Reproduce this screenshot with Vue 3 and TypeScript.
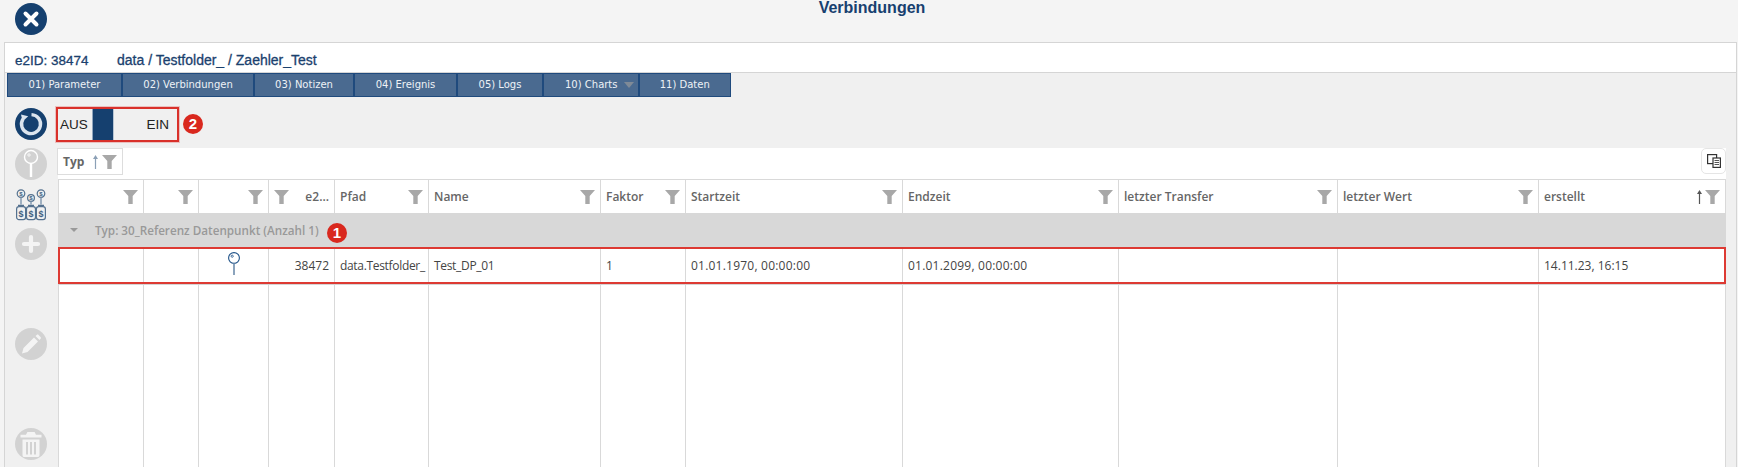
<script setup lang="ts">
interface Col { label: string; sort?: boolean; filterFirst?: boolean }
const tabs: string[] = ['01) Parameter', '02) Verbindungen', '03) Notizen', '04) Ereignis', '05) Logs', '10) Charts', '11) Daten']
const cols: Col[] = [
  { label: '' }, { label: '' }, { label: '' },
  { label: 'e2...', filterFirst: true },
  { label: 'Pfad' }, { label: 'Name' }, { label: 'Faktor' }, { label: 'Startzeit' }, { label: 'Endzeit' },
  { label: 'letzter Transfer' }, { label: 'letzter Wert' }, { label: 'erstellt', sort: true },
]
const cells: string[] = ['', '', '', '38472', 'data.Testfolder_', 'Test_DP_01', '1', '01.01.1970, 00:00:00', '01.01.2099, 00:00:00', '', '', '14.11.23, 16:15']
</script>

<template>
  <div class="page">
    <header class="titlebar">
      <svg class="close" viewBox="0 0 32 32" width="32" height="32">
        <circle cx="16" cy="16" r="16" fill="#15406f" />
        <path d="M10.5 10.5L21.5 21.5M21.5 10.5L10.5 21.5" stroke="#fff" stroke-width="4" stroke-linecap="round" />
      </svg>
      <h1 class="title">Verbindungen</h1>
    </header>

    <section class="panel">
      <div class="crumb">
        <span class="id">e2ID: 38474</span>
        <span class="path">data / Testfolder_ / Zaehler_Test</span>
      </div>
      <div class="body">
        <nav class="tabs">
          <div v-for="t in tabs" :key="t" class="tab">
            {{ t }}<span v-if="t.includes('Charts')" class="tab-caret"></span>
          </div>
        </nav>
        <div class="main">
          <aside class="side">
            <svg class="ic ic-refresh" viewBox="0 0 32 32" width="32" height="32">
              <circle cx="16" cy="16" r="16" fill="#15406f" />
              <path d="M16.5 6.6A9.5 9.5 0 1 1 8 11" fill="none" stroke="#dbe4ee" stroke-width="3.4" />
              <path d="M6 6.5L13.2 8.2L7.6 13.6Z" fill="#dbe4ee" />
            </svg>
            <svg class="ic ic-pin" viewBox="0 0 32 32" width="32" height="32">
              <circle cx="16" cy="16" r="16" fill="#d2d2d2" />
              <circle cx="16" cy="9" r="6.5" fill="none" stroke="#fff" stroke-width="1.4" />
              <circle cx="14" cy="7" r="1.2" fill="none" stroke="#fff" stroke-width=".8" />
              <path d="M16 15.5V29" stroke="#fff" stroke-width="2.4" />
            </svg>
            <svg class="ic-multi" viewBox="0 0 32 32" width="32" height="32">
              <g fill="none" stroke="#54718f" stroke-width="1.2">
                <circle cx="6" cy="4.6" r="3.8" /><circle cx="16" cy="9" r="3.4" /><circle cx="26" cy="4.6" r="3.8" />
                <path d="M6 8.5V15.5M16 12.5V15.5M26 8.5V15.5" stroke-width="1.6" stroke="#8ba0b6" />
                <rect x="1.6" y="17.6" width="9" height="13" rx="2.4" />
                <rect x="11.5" y="17.6" width="9" height="13" rx="2.4" />
                <rect x="21.4" y="17.6" width="9" height="13" rx="2.4" />
                <path d="M3 16.5H9M13 16.5H19M23 16.5H29" stroke-width="1.6" />
              </g>
              <g class="dollar" fill="#3f5f82">
                <text x="6" y="6.8">$</text><text x="16" y="11">$</text><text x="26" y="6.8">$</text>
                <text class="big" x="6" y="27.5">$</text><text class="big" x="16" y="27.5">$</text><text class="big" x="26" y="27.5">$</text>
              </g>
            </svg>
            <svg class="ic ic-plus" viewBox="0 0 32 32" width="32" height="32">
              <circle cx="16" cy="16" r="16" fill="#d2d2d2" />
              <path d="M16 9V23M9 16H23" stroke="#f4f4f4" stroke-width="4.2" stroke-linecap="round" />
            </svg>
            <svg class="ic ic-pencil" viewBox="0 0 32 32" width="32" height="32">
              <circle cx="16" cy="16" r="16" fill="#d2d2d2" />
              <path d="M7.5 24.5L9 19L19.5 8.5L23.5 12.5L13 23Z M21 7L22.2 5.9C22.8 5.4 23.5 5.4 24 5.9L26 7.9C26.6 8.5 26.6 9.2 26 9.8L25 11Z" fill="#f4f4f4" transform="translate(-.5 1)" />
            </svg>
            <svg class="ic ic-trash" viewBox="0 0 32 32" width="32" height="32">
              <circle cx="16" cy="16" r="16" fill="#d2d2d2" />
              <path d="M5.5 9.5H26.5V6.8H21L19.6 4H12.4L11 6.8H5.5Z" fill="#f4f4f4" />
              <path d="M7.5 11.5H24.5V27C24.5 28.4 23.6 29 22.6 29H9.4C8.4 29 7.5 28.4 7.5 27Z M11 14V26.5H13V14Z M15 14V26.5H17V14Z M19 14V26.5H21V14Z" fill="#f4f4f4" fill-rule="evenodd" />
            </svg>
          </aside>

          <div class="content">
            <div class="toolbar">
              <div class="switch">
                <span class="s-off">AUS</span>
                <span class="s-thumb"></span>
                <span class="s-on">EIN</span>
              </div>
              <span class="badge badge-2">2</span>
            </div>

            <div class="table">
              <div class="groupbar">
                <div class="chip">
                  <span>Typ</span>
                  <svg class="arrow" viewBox="0 0 5 14" width="5" height="14"><path d="M2.5 0L5 4H3.1V14H1.9V4H0Z" fill="#8ba0b6" /></svg>
                  <svg class="funnel" viewBox="0 0 15 14" width="15" height="14"><path d="M0 0H15L9.7 6V14H5.3V6Z" fill="#a8a8a8" /></svg>
                </div>
                <button class="copy" type="button" aria-label="Spalten">
                  <svg viewBox="0 0 14 14" width="14" height="14">
                    <rect x=".6" y=".6" width="9" height="9" fill="#fff" stroke="#333" stroke-width="1.2" />
                    <rect x="6" y="4" width="7.4" height="9.4" fill="#fff" stroke="#333" stroke-width="1.2" />
                    <path d="M7.5 6.5H12M7.5 8.5H12M7.5 10.5H12" stroke="#555" />
                  </svg>
                </button>
              </div>

              <div class="row head">
                <div v-for="(c, i) in cols" :key="i" class="th" :class="{ 'filter-first': c.filterFirst }">
                  <span class="th-label">{{ c.label }}</span>
                  <svg v-if="c.sort" class="arrow" viewBox="0 0 5 14" width="5" height="14"><path d="M2.5 0L5 4H3.1V14H1.9V4H0Z" fill="#555" /></svg>
                  <svg class="funnel" viewBox="0 0 15 14" width="15" height="14"><path d="M0 0H15L9.7 6V14H5.3V6Z" fill="#a8a8a8" /></svg>
                </div>
              </div>

              <div class="group">
                <span class="g-caret"></span>
                <span class="g-text">Typ: 30_Referenz Datenpunkt (Anzahl 1)</span>
                <span class="badge badge-1">1</span>
              </div>

              <div class="row data">
                <div v-for="(c, i) in cells" :key="i" class="td" :class="{ num: i === 3, tight: i === 4 || i === 5, wide: i === 7 || i === 8 }">
                  <svg v-if="i === 2" class="row-pin" viewBox="0 0 14 24" width="14" height="24">
                    <circle cx="7" cy="7" r="5.4" fill="#fff" stroke="#1f5288" stroke-width="1.1" />
                    <circle cx="5.2" cy="5.2" r="1.1" fill="none" stroke="#1f5288" stroke-width=".8" />
                    <path d="M7 12.5V24" stroke="#8ba3bc" stroke-width="2" />
                  </svg>
                  {{ c }}
                </div>
              </div>

              <div class="row filler">
                <div v-for="(c, i) in cols" :key="i" class="td"></div>
              </div>
            </div>
          </div>
        </div>
      </div>
    </section>
  </div>
</template>

<style>
html, body { margin: 0; background: #f4f4f4; }
</style>

<style scoped>
.page {
  width: 1738px;
  height: 467px;
  overflow: hidden;
  background: #f4f4f4;
  display: flex;
  flex-direction: column;
  font-family: "Liberation Sans", Arial, sans-serif;
}
.titlebar {
  height: 42px;
  flex: none;
  display: grid;
  grid-template-columns: 47px 1fr 41px;
  box-sizing: border-box;
}
.close { margin: 3px 0 0 15px; }
.title {
  margin: 0;
  text-align: center;
  font-size: 16px;
  line-height: 15px;
  font-weight: 700;
  color: #17406f;
}
.panel {
  flex: 1;
  min-height: 0;
  margin: 0 1px 0 4px;
  border: 1px solid #d5d5d5;
  border-bottom: 0;
  display: flex;
  flex-direction: column;
  background: #f0f0f0;
}
.crumb {
  flex: none;
  height: 29px;
  box-sizing: border-box;
  padding: 5px 0 0 10px;
  background: #fff;
  display: flex;
  align-items: center;
  font-size: 14px;
  color: #1b416e;
  -webkit-text-stroke: .3px #1b416e;
}
.id { width: 102px; font-size: 13.5px; }
.body {
  flex: 1;
  min-height: 0;
  display: flex;
  flex-direction: column;
  border-top: 1px solid #d5d5d5;
}
.tabs {
  flex: none;
  height: 23px;
  margin-left: 2px;
  display: grid;
  grid-template-columns: 115px 132px 100px 103px 86px 95.5px 92.5px;
  width: 724px;
}
.tab {
  position: relative;
  box-sizing: border-box;
  border: 1px solid #1f4a7d;
  background: #4a6a90;
  color: #eef2f6;
  font-family: "DejaVu Sans", sans-serif;
  font-size: 10px;
  line-height: 22px;
  text-align: center;
  white-space: nowrap;
}
.tab:nth-child(6) { text-align: left; padding-left: 21px; }
.tab-caret {
  position: absolute;
  right: 4px;
  top: 8px;
  border-left: 5px solid transparent;
  border-right: 5px solid transparent;
  border-top: 6px solid #7f8a97;
}
.main { flex: 1; min-height: 0; display: flex; }
.side {
  width: 53px;
  flex: none;
  display: flex;
  flex-direction: column;
  align-items: flex-start;
  box-sizing: border-box;
  padding: 12px 0 0 10px;
}
.ic, .ic-multi { display: block; flex: none; }
.ic-pin { margin-top: 8px; }
.ic-multi { margin-top: 9px; }
.ic-plus { margin-top: 7px; }
.ic-pencil { margin-top: 68px; }
.ic-trash { margin-top: 68px; }
.dollar text {
  font-family: "Liberation Sans", sans-serif;
  font-size: 6px;
  font-weight: 700;
  text-anchor: middle;
}
.dollar .big { font-size: 9px; }
.content { flex: 1; min-width: 0; display: flex; flex-direction: column; padding-right: 10px; }
.toolbar {
  flex: none;
  height: 52px;
  box-sizing: border-box;
  padding-top: 13px;
  display: flex;
  position: relative;
}
.switch {
  width: 119px;
  height: 31px;
  display: flex;
  align-items: center;
  outline: 2px solid #d9302a;
  box-shadow: 0 0 0 3px rgba(217, 48, 42, .25);
  font-size: 13.5px;
  color: #222;
  box-sizing: border-box;
  padding-left: 2px;
}
.s-off { width: 32px; }
.s-thumb {
  width: 20px;
  height: 32px;
  background: #15406f;
  border-left: 1px solid #8fa5bd;
  border-right: 1px solid #b7c5d4;
}
.s-on { margin-left: auto; margin-right: 8px; }
.badge {
  position: absolute;
  width: 20px;
  height: 20px;
  border-radius: 50%;
  background: #d9281e;
  color: #fff;
  font-size: 15px;
  font-weight: 700;
  line-height: 20px;
  text-align: center;
}
.badge-2 { left: 125px; top: 18px; }
.table { flex: 1; min-height: 0; background: #fff; display: flex; flex-direction: column; }
.groupbar {
  flex: none;
  height: 31px;
  display: flex;
  justify-content: space-between;
  align-items: flex-start;
}
.chip {
  margin-left: -1px;
  width: 66px;
  height: 27px;
  box-sizing: border-box;
  border: 1px solid #ddd;
  display: flex;
  align-items: center;
  padding-left: 5px;
  font-family: "Open Sans", sans-serif;
  font-size: 12px;
  font-weight: 700;
  color: #666;
}
.chip .arrow { margin-left: 9px; }
.chip .funnel { margin-left: 4px; }
.copy {
  width: 25px;
  height: 26px;
  padding: 0;
  background: #fff;
  border: 1px solid #e5e5e5;
  border-radius: 5px;
  display: flex;
  align-items: center;
  justify-content: center;
}
.row {
  display: grid;
  grid-template-columns: 86px 55px 70px 66px 94px 172px 85px 217px 216px 219px 201px 187px;
}
.head { flex: none; height: 33px; border-top: 1px solid #d9d9d9; }
.th {
  box-sizing: border-box;
  border-right: 1px solid #d9d9d9;
  display: flex;
  align-items: center;
  padding: 0 5px 0 5px;
  font-family: "Open Sans", sans-serif;
  font-size: 12px;
  font-weight: 600;
  color: #666;
  white-space: nowrap;
}
.th:first-child { border-left: 1px solid #d9d9d9; }
.th-label { flex: 1; }
.th .arrow { margin-right: 3px; }
.filter-first .funnel { order: -1; }
.filter-first .th-label { text-align: right; }
.group {
  flex: none;
  height: 34px;
  background: #d8d8d8;
  position: relative;
  display: flex;
  align-items: center;
  font-family: "Open Sans", sans-serif;
  font-size: 11.7px;
  font-weight: 600;
  color: #999;
}
.g-caret {
  margin-left: 12px;
  margin-right: 17px;
  border-left: 4px solid transparent;
  border-right: 4px solid transparent;
  border-top: 4px solid #999;
}
.badge-1 { left: 269px; top: 10px; font-family: "Liberation Sans", sans-serif; }
.data {
  flex: none;
  height: 37px;
  position: relative;
  outline: 2px solid #dd3a33;
  outline-offset: -2px;
  box-shadow: 0 1px 0 #d5d5d5;
  box-sizing: border-box;
}
.td {
  box-sizing: border-box;
  border-right: 1px solid #d9d9d9;
  display: flex;
  align-items: center;
  padding: 0 5px;
  font-family: "Open Sans", sans-serif;
  font-size: 12px;
  color: #444;
  white-space: nowrap;
  overflow: hidden;
}
.td:first-child { border-left: 1px solid #d9d9d9; }
.num { justify-content: flex-end; }
.tight { letter-spacing: -.32px; }
.wide { letter-spacing: .22px; }
.row-pin { margin: -6px 0 0 23px; }
.filler { flex: 1; min-height: 0; }
</style>
